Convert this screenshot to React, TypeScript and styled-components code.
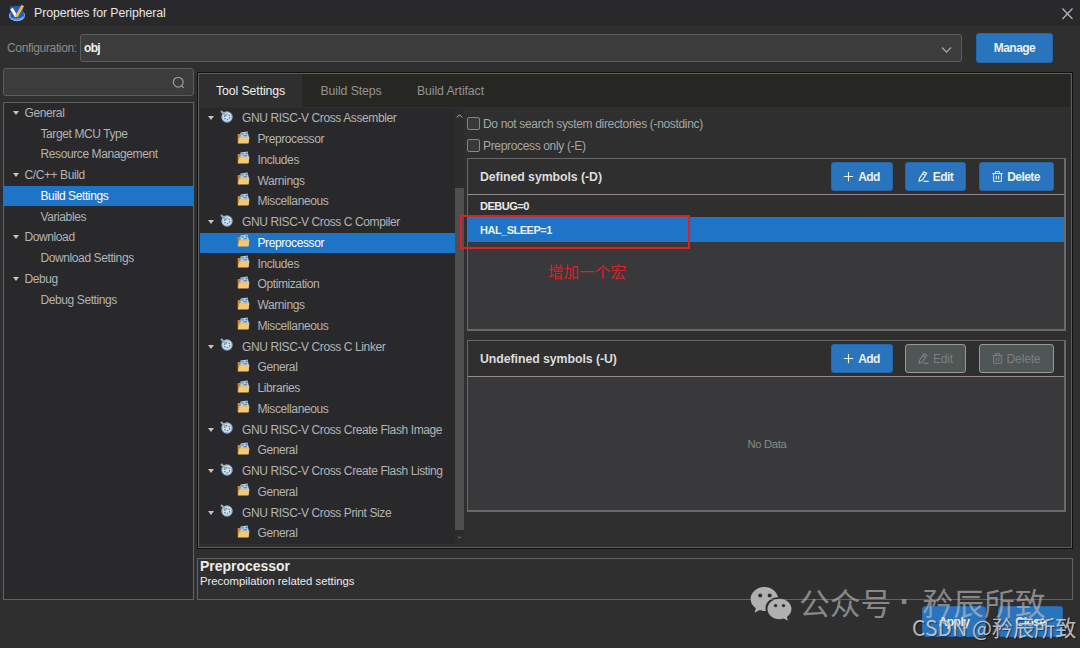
import React, { useState } from 'react';
import styled, { createGlobalStyle, css } from 'styled-components';

const GlobalStyle = createGlobalStyle`
  * {
    box-sizing: border-box;
  }

  body {
    margin: 0;
    background: #2f2f2f;
    font-family: 'Liberation Sans', Arial, 'Noto Sans CJK SC', sans-serif;
    font-size: 12px;
    color: #b3b3b3;
    overflow: hidden;
  }
`;

const Dialog = styled.div`
  position: relative;
  width: 1080px;
  height: 648px;
  display: flex;
  flex-direction: column;
  background: #2f2f2f;
`;

const TitleBar = styled.header`
  height: 26px;
  flex: none;
  display: flex;
  align-items: center;
  padding: 0 6px 0 8px;
  background: #29292b;
`;

const Title = styled.span`
  flex: 1;
  margin-left: 8px;
  font-size: 12.35px;
  letter-spacing: -0.08px;
  color: #e6e6e6;
`;

const ConfigBar = styled.div`
  height: 46px;
  flex: none;
  display: flex;
  align-items: center;
  padding: 0 27px 2px 7px;
`;

const ConfigLabel = styled.label`
  width: 73px;
  flex: none;
  font-size: 12px;
  letter-spacing: -0.35px;
  color: #8c8c8c;
  white-space: nowrap;
`;

const Select = styled.div`
  flex: 1;
  height: 28px;
  margin-right: 14px;
  padding: 0 9px 0 3px;
  display: flex;
  align-items: center;
  justify-content: space-between;
  background: #3c3c3c;
  border: 1px solid #5c5c5c;
  border-radius: 3px;
  color: #f2f2f2;
  font-weight: bold;
  font-size: 12px;
  letter-spacing: -0.7px;
`;

const Button = styled.button<{ $width: number; $height?: number }>`
  width: ${({ $width }) => $width}px;
  height: ${({ $height }) => $height || 29}px;
  padding: 0;
  display: flex;
  align-items: center;
  justify-content: center;
  gap: 4px;
  font-family: inherit;
  font-size: 12px;
  letter-spacing: -0.55px;
  font-weight: bold;
  color: #e8f0f8;
  background: #2a74be;
  border: 1px solid #2468ac;
  border-radius: 3px;

  &:disabled {
    color: #7c7f80;
    font-weight: normal;
    letter-spacing: -0.15px;
    background: #505556;
    border-color: #96999a;
  }
`;

const Body = styled.main`
  height: 528px;
  flex: none;
  display: grid;
  grid-template-columns: 191px 876px;
  column-gap: 3px;
  padding-left: 3px;
`;

const Sidebar = styled.aside`
  display: flex;
  flex-direction: column;
  gap: 6px;
  margin-top: -4px;
`;

const SearchBox = styled.div`
  height: 28px;
  flex: none;
  display: flex;
  align-items: center;
  justify-content: flex-end;
  padding-right: 8px;
  background: #3c3c3c;
  border: 1px solid #5c5c5c;
  border-radius: 3px;
`;

const NavTree = styled.nav`
  flex: 1;
  background: #29292b;
  border: 1px solid #626262;

  & > :first-child {
    margin-top: -0.5px;
  }
`;

const TreeRow = styled.div<{ $indent: number; $active?: boolean }>`
  height: 20.75px;
  display: flex;
  align-items: center;
  padding-left: ${({ $indent }) => $indent}px;
  font-size: 12px;
  letter-spacing: -0.4px;
  color: #b3b3b3;
  white-space: nowrap;
  cursor: pointer;

  ${({ $active }) =>
    $active &&
    css`
      background: #1e75c8;
      color: #ffffff;
    `}
`;

const Caret = styled.span`
  width: 0;
  height: 0;
  flex: none;
  margin-right: 6px;
  border-left: 3.5px solid transparent;
  border-right: 3.5px solid transparent;
  border-top: 4px solid #c4c4c4;
`;

const Content = styled.section`
  display: flex;
  flex-direction: column;
  gap: 9px;
`;

const SettingsPanel = styled.div`
  height: 477px;
  flex: none;
  display: flex;
  flex-direction: column;
  border: 1px solid #111;
  box-shadow: inset 0 0 0 1px #5e5e5e;
  padding: 2px;
`;

const TabBar = styled.div`
  height: 33px;
  margin: -1px 0 0;
  flex: none;
  display: flex;
  background: #262722;
`;

const Tab = styled.div<{ $active?: boolean; $width: number }>`
  width: ${({ $width }) => $width}px;
  display: flex;
  align-items: center;
  padding-left: ${({ $active }) => ($active ? 16 : 18.5)}px;
  font-size: 12.3px;
  letter-spacing: -0.1px;
  color: ${({ $active }) => ($active ? '#f0f0f0' : '#949494')};
  background: ${({ $active }) => ($active ? '#2f2f2f' : 'transparent')};
  cursor: pointer;
`;

const TabContent = styled.div`
  flex: 1;
  display: flex;
  padding: 1px 4px 4px 0;
`;

const ToolTree = styled.div`
  width: 255px;
  flex: none;
  background: #29292b;
  overflow: hidden;
`;

const ToolIcon = styled.svg<{ $gap: number }>`
  flex: none;
  margin: -4px ${({ $gap }) => $gap}px 0 0;
`;

const ScrollTrack = styled.div`
  width: 9px;
  flex: none;
  display: flex;
  flex-direction: column;
  align-items: center;
  background: #2c2c2d;
`;

const ScrollThumb = styled.div`
  width: 9px;
  height: 342px;
  margin-top: 66px;
  margin-bottom: 5px;
  background: #4f4f4f;
`;

const Detail = styled.div`
  flex: 1;
  display: flex;
  flex-direction: column;
  padding: 9px 0 0 3px;
`;

const CheckRow = styled.label`
  height: 21.5px;
  flex: none;
  display: flex;
  align-items: flex-start;
  gap: 3px;
  font-size: 12px;
  letter-spacing: -0.34px;
  line-height: 14px;
  color: #a6a6a6;

  & + & {
    height: 19.5px;
  }
`;

const Checkbox = styled.span`
  width: 13px;
  height: 13px;
  border: 1px solid #868686;
  border-radius: 2px;
  background: #393939;
`;

const SymbolBox = styled.div<{ $height: number; $gap?: number }>`
  position: relative;
  height: ${({ $height }) => $height}px;
  flex: none;
  display: flex;
  flex-direction: column;
  margin-top: ${({ $gap }) => $gap || 0}px;
  background: #39393b;
  border: 1px solid #686868;
  border-right-width: 2px;
  border-bottom-width: 2px;
`;

const SymbolHeader = styled.div`
  height: 36px;
  flex: none;
  display: flex;
  align-items: center;
  gap: 12.5px;
  padding: 0 10.5px 0 12px;
  background: #2f2f2f;
  border-bottom: 1px solid #978a8a;
`;

const SymbolTitle = styled.h3`
  flex: 1;
  margin: 1px 0 0;
  font-size: 12.3px;
  letter-spacing: -0.05px;
  font-weight: bold;
  color: #dcdcdc;
`;

const SymbolRow = styled.div<{ $active?: boolean }>`
  height: ${({ $active }) => ($active ? 24 : 23)}px;
  flex: none;
  display: flex;
  align-items: center;
  padding-left: 12px;
  font-size: 11px;
  letter-spacing: -0.5px;
  font-weight: bold;
  color: #ececec;
  background: ${({ $active }) => ($active ? '#1e75c8' : '#2f2f2f')};
  border-bottom: 1px solid #666;
`;

const NoData = styled.div`
  flex: 1;
  display: flex;
  align-items: center;
  justify-content: center;
  padding-left: 2px;
  font-size: 11.2px;
  letter-spacing: -0.3px;
  color: #8a8a8a;
`;

const Highlight = styled.div`
  position: absolute;
  left: -8px;
  top: 56px;
  width: 230px;
  height: 34px;
  border: 2px solid #d9212b;
`;

const Note = styled.div`
  position: absolute;
  left: 80px;
  top: 100px;
  font: 15.6px/24px 'Noto Sans CJK SC', sans-serif;
  color: #d9212b;
`;

const Description = styled.div`
  height: 42px;
  flex: none;
  padding: 0 2px;
  border: 1px solid #626262;
  color: #ececec;
  font-size: 11.3px;
  line-height: 14px;

  h2 {
    margin: 0;
    font-size: 14px;
    letter-spacing: -0.02px;
    line-height: 15px;
  }
`;

const Footer = styled.footer`
  display: flex;
  justify-content: flex-end;
  gap: 12px;
  padding: 6px 17px 0 0;
`;

const AccountMark = styled.div`
  position: absolute;
  left: 750px;
  top: 581px;
  display: flex;
  align-items: center;
  height: 42px;
  font: 30.8px/42px 'Noto Sans CJK SC', sans-serif;
  color: rgba(190, 190, 190, 0.64);
  white-space: nowrap;

  svg {
    margin: 4px 6px 0 0;
  }
`;

const Dot = styled.span`
  width: 31px;
  padding-right: 4px;
  font-family: 'Liberation Sans', sans-serif;
  font-weight: bold;
  text-align: center;
`;

const SiteMark = styled.div`
  position: absolute;
  left: 912px;
  top: 611px;
  font: 21.1px/32px 'Noto Sans CJK SC', sans-serif;
  color: rgba(225, 225, 225, 0.8);
  text-shadow: 1px 1px 1px rgba(0, 0, 0, 0.5);
  white-space: nowrap;
`;

const LogoIcon = () => (
  <svg width="18" height="18" viewBox="0 0 18 18">
    <ellipse cx="9" cy="11.5" rx="8" ry="5.8" fill="#8fc0ee" />
    <path d="M2 2.5 14 1.5 16.5 13 9 16.5 2.5 14Z" fill="#2559c4" />
    <path d="M1.5 13.2c4 3.2 10 3.2 14.5-.5" fill="none" stroke="#5fa5ec" strokeWidth="1.5" />
    <path d="M3.5 4.5 8.3 12.5" stroke="#fff" strokeWidth="3" />
    <path d="M8.3 12.7 14.8 1.5" stroke="#f0bd24" strokeWidth="2.8" />
  </svg>
);

const CloseIcon = () => (
  <svg width="13" height="13" viewBox="0 0 13 13" fill="none" stroke="#b4b4b4" strokeWidth="1.3">
    <path d="M1.5 1.5 11.5 12M11.5 1.5 1.5 12" />
  </svg>
);

const ChevronIcon = () => (
  <svg width="11" height="11" viewBox="0 0 11 11" fill="none" stroke="#a8a8a8" strokeWidth="1.2">
    <path d="m1 4.5 4.5 4.6L10 4.5" />
  </svg>
);

const SearchIcon = () => (
  <svg width="13" height="13" viewBox="0 0 13 13" fill="none" stroke="#9c9c9c" strokeWidth="1.2">
    <circle cx="6.2" cy="6.2" r="4.9" />
    <path d="m9.2 9.2 2.4 2.6" />
  </svg>
);

const PlusIcon = () => (
  <svg width="11" height="11" viewBox="0 0 11 11" fill="none" stroke="currentColor" strokeWidth="1.1">
    <path d="M5.5 1v9.2M.8 5.5h9.4" />
  </svg>
);

const EditIcon = () => (
  <svg width="11" height="11" viewBox="0 0 11 11" fill="none" stroke="currentColor" strokeWidth="1.2">
    <path d="M5.8.9 8.7 2.3 4.4 9 1.2 10.2 1.5 7.4ZM4.8 2.8 7.3 4.3M5.5 10.3h5.2" />
  </svg>
);

const TrashIcon = () => (
  <svg width="11" height="11" viewBox="0 0 11 11" fill="none" stroke="currentColor" strokeWidth="1">
    <path d="M.4 2.5h10.2M3.5 2.3V.6h4v1.7M1.6 2.6v7.8h7.8V2.6M4.3 4.6v3.8M6.7 4.6v3.8" />
  </svg>
);

const GearIcon = () => (
  <ToolIcon $gap={9} width="13" height="13" viewBox="0 0 13 13">
    <circle cx="7" cy="7" r="5" fill="#d3e5f5" />
    <circle cx="7" cy="7" r="5.1" fill="none" stroke="#8fb3d6" strokeWidth="1.2" />
    <circle cx="7" cy="7" r="2.7" fill="none" stroke="#5686b5" strokeWidth="1.3" strokeDasharray="1.6 1.2" />
    <path d="M1 1 6.5 6.3" stroke="#a5a797" strokeWidth="2.2" />
  </ToolIcon>
);

const FolderIcon = () => (
  <ToolIcon $gap={8} width="13" height="13" viewBox="0 0 13 13">
    <path d="M.7 3h3v2h8v7H.7Z" fill="#c98a35" />
    <path d="M3.5 1.4 10.5.4 12 6.5H3.5Z" fill="#b5cfe8" />
    <path d="M4.6 2.3h2v1.2h-2ZM8.5 1.8h2v1.5h-2ZM6.4 4.3h3.6v1H6.4Z" fill="#4879ae" />
    <path d="M2.4 6.3h10.1L11.4 12.4H.9Z" fill="#f5c875" />
  </ToolIcon>
);

const ChatIcon = () => (
  <svg width="43" height="36" viewBox="0 0 43 36" fill="#b0b0b0">
    <path d="M14.6 1C6.9 1 .6 6.3.6 13c0 3.8 2 7 5.2 9.2L4.6 26.8 9.7 24.1c1.5.5 3.2.8 5 .8h1.2c-.3-1-.4-1.9-.4-2.9 0-6 5.7-10.6 12.6-10.7C26.8 5.3 21.3 1 14.6 1Z" />
    <path d="M29.5 12.8c-6.7 0-12 4.5-12 10.2s5.3 10.3 12 10.3c1.5 0 3-.3 4.3-.7l4.2 2.2-1.1-3.9c2.8-1.8 4.6-4.7 4.6-7.9 0-5.7-5.3-10.2-12-10.2Z" />
    <g fill="#303030">
      <circle cx="10.2" cy="9.5" r="2" />
      <circle cx="19.7" cy="9.5" r="2" />
      <circle cx="25.6" cy="19.6" r="1.7" />
      <circle cx="33.5" cy="19.6" r="1.7" />
    </g>
  </svg>
);

const navGroups = [
  { name: 'General', children: ['Target MCU Type', 'Resource Management'] },
  { name: 'C/C++ Build', children: ['Build Settings', 'Variables'] },
  { name: 'Download', children: ['Download Settings'] },
  { name: 'Debug', children: ['Debug Settings'] },
];

const toolGroups = [
  { name: 'GNU RISC-V Cross Assembler', children: ['Preprocessor', 'Includes', 'Warnings', 'Miscellaneous'] },
  { name: 'GNU RISC-V Cross C Compiler', children: ['Preprocessor', 'Includes', 'Optimization', 'Warnings', 'Miscellaneous'] },
  { name: 'GNU RISC-V Cross C Linker', children: ['General', 'Libraries', 'Miscellaneous'] },
  { name: 'GNU RISC-V Cross Create Flash Image', children: ['General'] },
  { name: 'GNU RISC-V Cross Create Flash Listing', children: ['General'] },
  { name: 'GNU RISC-V Cross Print Size', children: ['General'] },
];

const tabs = [
  { name: 'Tool Settings', width: 102 },
  { name: 'Build Steps', width: 96.5 },
  { name: 'Build Artifact', width: 110 },
];

const SymbolButtons: React.FC<{ disabled?: boolean }> = ({ disabled }) => (
  <>
    <Button $width={62}><PlusIcon />Add</Button>
    <Button $width={61} disabled={disabled}><EditIcon />Edit</Button>
    <Button $width={75} disabled={disabled}><TrashIcon />Delete</Button>
  </>
);

const App: React.FC = () => {
  const [page, setPage] = useState('Build Settings');
  const [tab, setTab] = useState('Tool Settings');
  const [tool, setTool] = useState('GNU RISC-V Cross C Compiler/Preprocessor');
  const [symbol, setSymbol] = useState('HAL_SLEEP=1');

  return (
    <Dialog>
      <GlobalStyle />
      <TitleBar>
        <LogoIcon />
        <Title>Properties for Peripheral</Title>
        <CloseIcon />
      </TitleBar>

      <ConfigBar>
        <ConfigLabel>Configuration:</ConfigLabel>
        <Select>
          obj
          <ChevronIcon />
        </Select>
        <Button $width={77} $height={30}>Manage</Button>
      </ConfigBar>

      <Body>
        <Sidebar>
          <SearchBox><SearchIcon /></SearchBox>
          <NavTree>
            {navGroups.map(group => (
              <React.Fragment key={group.name}>
                <TreeRow $indent={8.5}><Caret />{group.name}</TreeRow>
                {group.children.map(name => (
                  <TreeRow key={name} $indent={36.5} $active={name === page} onClick={() => setPage(name)}>
                    {name}
                  </TreeRow>
                ))}
              </React.Fragment>
            ))}
          </NavTree>
        </Sidebar>

        <Content>
          <SettingsPanel>
            <TabBar>
              {tabs.map(({ name, width }) => (
                <Tab key={name} $width={width} $active={name === tab} onClick={() => setTab(name)}>
                  {name}
                </Tab>
              ))}
            </TabBar>
            <TabContent>
              <ToolTree>
                {toolGroups.map(group => (
                  <React.Fragment key={group.name}>
                    <TreeRow $indent={8}><Caret /><GearIcon />{group.name}</TreeRow>
                    {group.children.map(name => {
                      const id = `${group.name}/${name}`;
                      return (
                        <TreeRow key={id} $indent={36.5} $active={id === tool} onClick={() => setTool(id)}>
                          <FolderIcon />{name}
                        </TreeRow>
                      );
                    })}
                  </React.Fragment>
                ))}
              </ToolTree>
              <ScrollTrack>
                <svg width="7" height="14" viewBox="0 0 7 14" fill="none" stroke="#b0b0b0">
                  <path d="m.8 9.5 2.7-2.7 2.7 2.7" />
                </svg>
                <ScrollThumb />
                <svg width="5" height="6" viewBox="0 0 5 6" fill="none" stroke="#777">
                  <path d="m.8 1.5 1.7 1.7 1.7-1.7" />
                </svg>
              </ScrollTrack>
              <Detail>
                <CheckRow><Checkbox />Do not search system directories (-nostdinc)</CheckRow>
                <CheckRow><Checkbox />Preprocess only (-E)</CheckRow>
                <SymbolBox $height={173}>
                  <SymbolHeader>
                    <SymbolTitle>Defined symbols (-D)</SymbolTitle>
                    <SymbolButtons />
                  </SymbolHeader>
                  {['DEBUG=0', 'HAL_SLEEP=1'].map(name => (
                    <SymbolRow key={name} $active={name === symbol} onClick={() => setSymbol(name)}>
                      {name}
                    </SymbolRow>
                  ))}
                  <Highlight />
                  <Note>增加一个宏</Note>
                </SymbolBox>
                <SymbolBox $height={172} $gap={9}>
                  <SymbolHeader>
                    <SymbolTitle>Undefined symbols (-U)</SymbolTitle>
                    <SymbolButtons disabled />
                  </SymbolHeader>
                  <NoData>No Data</NoData>
                </SymbolBox>
              </Detail>
            </TabContent>
          </SettingsPanel>
          <Description>
            <h2>Preprocessor</h2>
            Precompilation related settings
          </Description>
        </Content>
      </Body>

      <Footer>
        <Button $width={64} $height={31}>Apply</Button>
        <Button $width={65} $height={31}>Close</Button>
      </Footer>

      <AccountMark>
        <ChatIcon />
        公众号<Dot>·</Dot>矜辰所致
      </AccountMark>
      <SiteMark>CSDN @矜辰所致</SiteMark>
    </Dialog>
  );
};

export default App;
